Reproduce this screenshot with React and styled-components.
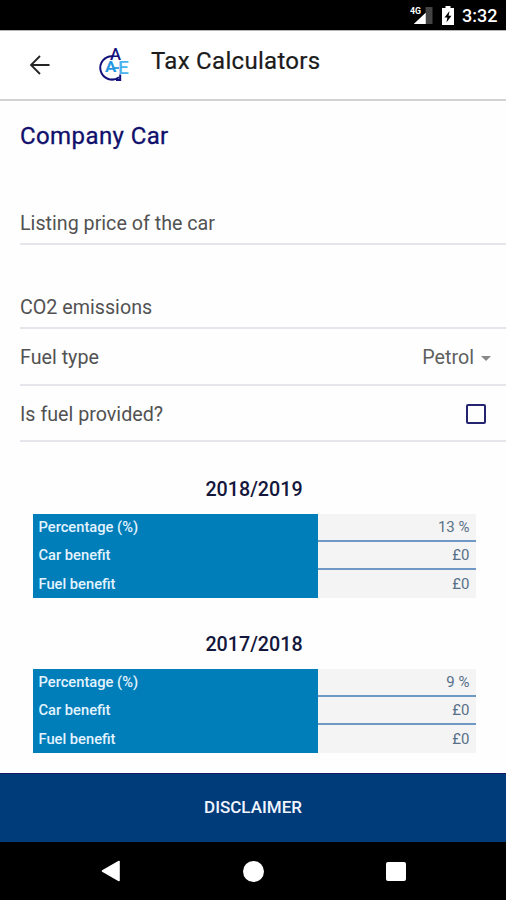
import React from 'react';
import styled, { createGlobalStyle } from 'styled-components';

const years = [
  { year: '2018/2019', percentage: '13 %', car: '£0', fuel: '£0' },
  { year: '2017/2018', percentage: '9 %', car: '£0', fuel: '£0' },
];

const StatusIcons = () => (
  <svg width="74" height="22" viewBox="0 0 74 22">
    <path d="M26 20 L44 3 V20 Z" fill="#fff" />
    <path d="M37.5 3 H44.5 V20 H37.5 Z" fill="#444" />
    <path d="M26 20 L37.5 9 V20 Z" fill="#fff" />
    <path d="M57.5 2 h5 v2 h3.5 v17 h-12 v-17 h3.5 Z" fill="#fff" />
    <path d="M61.5 7 L56.5 13.6 H59.4 L58.4 18.6 L63.5 11.8 H60.6 Z" fill="#000" />
    <text x="22" y="10" fill="#fff" fontSize="9.5" fontWeight="700" textLength="11" lengthAdjust="spacingAndGlyphs">4G</text>
  </svg>
);

const Logo = () => (
  <svg width="36" height="44" viewBox="97 43 36 44" fontFamily="Roboto, sans-serif">
    <path
      d="M113 56.2 A11.7 11.7 0 1 0 119 77.2 M120.2 74.6 V80 H116"
      fill="none"
      stroke="#11117c"
      strokeWidth="2"
    />
    <text x="110" y="59.6" fontSize="17" fontWeight="500" fill="#11117c" textLength="11" lengthAdjust="spacingAndGlyphs">A</text>
    <text x="105" y="72.4" fontSize="15.5" fontWeight="700" fill="#2797df" textLength="11.4" lengthAdjust="spacingAndGlyphs">A</text>
    <text x="118" y="74" fontSize="17.5" fontWeight="500" fill="#4bb2ee" textLength="10.8" lengthAdjust="spacingAndGlyphs">E</text>
    <path d="M114 68 H119" stroke="#2797df" strokeWidth="1.8" />
  </svg>
);

const YearTable = ({ data }) => (
  <YearSection>
    <YearTitle>{data.year}</YearTitle>
    <Table>
      <Labels>
        <Label>Percentage (%)</Label>
        <Label>Car benefit</Label>
        <Label>Fuel benefit</Label>
      </Labels>
      <Values>
        <Value>{data.percentage}</Value>
        <Value>{data.car}</Value>
        <Value>{data.fuel}</Value>
      </Values>
    </Table>
  </YearSection>
);

const App = () => (
  <Screen>
    <GlobalStyle />
    <StatusBar>
      <StatusIcons />
      <Clock>3:32</Clock>
    </StatusBar>
    <Toolbar>
      <BackButton aria-label="Back">
        <svg width="22" height="20" viewBox="0 0 22 20" fill="none" stroke="#252525" strokeWidth="1.8">
          <path d="M20.5 10 H2.2 M11 1 L2 10 L11 19" />
        </svg>
      </BackButton>
      <Logo />
      <Title>Tax Calculators</Title>
    </Toolbar>
    <Content>
      <Heading>Company Car</Heading>
      <Field $height={84} $pad={7}>
        <FieldLabel>Listing price of the car</FieldLabel>
      </Field>
      <Field $height={84} $pad={7}>
        <FieldLabel>CO2 emissions</FieldLabel>
      </Field>
      <Field $height={57} $pad={14}>
        <FieldLabel>Fuel type</FieldLabel>
        <Select>
          Petrol
          <Caret />
        </Select>
      </Field>
      <Field $height={56} $pad={13}>
        <FieldLabel>Is fuel provided?</FieldLabel>
        <Checkbox />
      </Field>
      {years.map(data => (
        <YearTable key={data.year} data={data} />
      ))}
    </Content>
    <Disclaimer>DISCLAIMER</Disclaimer>
    <NavBar>
      <svg width="20" height="22" viewBox="0 0 20 22">
        <path d="M18 1.5 V20.5 L1.5 11 Z" fill="#fff" stroke="#fff" strokeWidth="1.6" strokeLinejoin="round" />
      </svg>
      <HomeButton />
      <RecentButton />
    </NavBar>
  </Screen>
);

export default App;

const GlobalStyle = createGlobalStyle`
  body {
    margin: 0;
    background: #fff;
    font-family: Roboto, sans-serif;
  }

  * {
    box-sizing: border-box;
  }

  svg {
    display: block;
    flex: none;
  }
`;

const Screen = styled.div`
  display: flex;
  flex-direction: column;
  width: 506px;
  height: 900px;
  overflow: hidden;
  background: #fefefe;
`;

const StatusBar = styled.div`
  display: flex;
  justify-content: flex-end;
  height: 30px;
  flex: none;
  padding: 4px 9px 0 0;
  background: #000;
`;

const Clock = styled.span`
  width: 35px;
  font-size: 18px;
  font-weight: 500;
  line-height: 24px;
  color: #fff;
  white-space: nowrap;
`;

const Toolbar = styled.header`
  display: flex;
  align-items: center;
  height: 71px;
  flex: none;
  border-top: 1px solid #b5b5b5;
  border-bottom: 2px solid #d2d2d2;
  background: #fff;
`;

const BackButton = styled.button`
  margin: 0 46px 0 29px;
  padding: 0;
  border: 0;
  background: none;
`;

const Title = styled.h1`
  margin: 0 0 8px 18px;
  font-size: 24px;
  font-weight: 400;
  line-height: 28px;
  letter-spacing: 0.3px;
  color: #1b1b1b;
  -webkit-text-stroke: 0.2px #1b1b1b;
`;

const Content = styled.main`
  height: 672px;
  flex: none;
`;

const Heading = styled.h2`
  height: 60px;
  margin: 0;
  padding: 21px 0 0 20px;
  font-size: 24px;
  font-weight: 400;
  line-height: 28px;
  letter-spacing: 0.4px;
  color: #10106c;
  -webkit-text-stroke: 0.3px #10106c;
`;

const Field = styled.div`
  display: flex;
  align-items: flex-end;
  justify-content: space-between;
  height: ${({ $height }) => $height}px;
  margin-left: 20px;
  padding-bottom: ${({ $pad }) => $pad}px;
  border-bottom: 2px solid #e4e6ec;
`;

const FieldLabel = styled.span`
  font-size: 19.7px;
  line-height: 24px;
  color: #525252;
`;

const Select = styled.div`
  display: flex;
  align-items: center;
  gap: 7px;
  margin-right: 15px;
  font-size: 19.7px;
  line-height: 24px;
  color: #5f5f5f;
`;

const Caret = styled.i`
  border: 5.5px solid transparent;
  border-top-color: #888;
  border-bottom: 0;
`;

const Checkbox = styled.div`
  width: 20px;
  height: 20px;
  margin: 0 20px 3px 0;
  border: 2px solid #25256f;
  border-radius: 2px;
`;

const YearSection = styled.section`
  width: 443px;
  height: 155px;
  margin-left: 32.5px;
  padding-top: 36px;
`;

const YearTitle = styled.h3`
  margin: 0 0 12px;
  font-size: 19.7px;
  font-weight: 500;
  line-height: 24px;
  text-align: center;
  color: #14173c;
`;

const Table = styled.div`
  display: grid;
  grid-template-columns: 285px 1fr;
  height: 84px;
`;

const Labels = styled.div`
  display: grid;
  grid-template-rows: repeat(3, 28px);
  background: #007eb9;
`;

const Label = styled.span`
  padding-left: 6px;
  font-size: 14.7px;
  font-weight: 500;
  line-height: 27px;
  color: #e3f3ff;

  &:last-child {
    line-height: 28px;
  }
`;

const Values = styled.div`
  display: grid;
  grid-template-rows: repeat(3, 28px);
  background: #f4f4f4;
`;

const Value = styled.span`
  padding-right: 6px;
  font-size: 15px;
  line-height: 27px;
  text-align: right;
  color: #587087;

  &:not(:last-child) {
    border-bottom: 2px solid #7098c4;
  }

  &:last-child {
    line-height: 28px;
  }
`;

const Disclaimer = styled.button`
  height: 69px;
  flex: none;
  padding: 0 0 3px;
  border: 0;
  border-top: 1px solid #15156c;
  background: #003b7a;
  font-family: inherit;
  font-size: 17px;
  font-weight: 500;
  color: #f1f5ff;
`;

const NavBar = styled.nav`
  display: flex;
  align-items: center;
  justify-content: space-between;
  height: 58px;
  flex: none;
  padding: 0 100px 0 101px;
  background: #000;
`;

const HomeButton = styled.span`
  width: 21px;
  height: 21px;
  border-radius: 50%;
  background: #fff;
`;

const RecentButton = styled.span`
  width: 20px;
  height: 19px;
  border-radius: 2px;
  background: #fff;
`;
